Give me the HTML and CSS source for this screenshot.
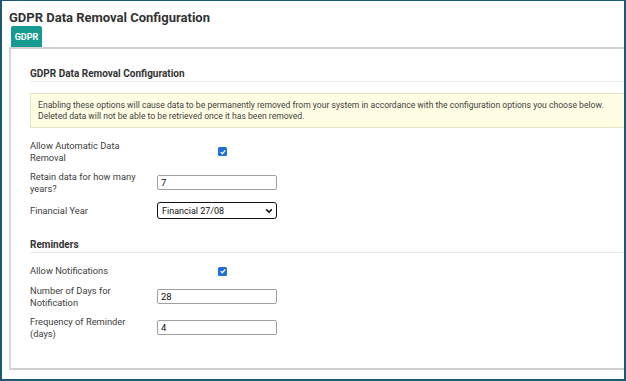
FILE: index.html
```html
<!DOCTYPE html>
<html>
<head>
<meta charset="utf-8">
<link rel="stylesheet" href="styles.css">
</head>
<body>
<div class="frame">
  <h1 class="title">GDPR Data Removal Configuration</h1>
  <div class="tabs"><span class="tab">GDPR</span></div>
  <div class="panel">
    <h2 class="section-title">GDPR Data Removal Configuration</h2>
    <div class="warning">Enabling these options will cause data to be permanently removed from your system in accordance with the configuration options you choose below.<br>Deleted data will not be able to be retrieved once it has been removed.</div>
    <div class="form">
      <div class="row">
        <label class="lbl">Allow Automatic Data Removal</label>
        <div class="ctl"><span class="check"><svg viewBox="0 0 10 10" width="10" height="10"><path d="M2.2 5.2 L4.2 7.2 L7.9 2.9" fill="none" stroke="#fff" stroke-width="1.6"/></svg></span></div>
      </div>
      <div class="row">
        <label class="lbl">Retain data for how many years?</label>
        <div class="ctl"><input class="txt" type="text" value="7"></div>
      </div>
      <div class="row">
        <label class="lbl">Financial Year</label>
        <div class="ctl"><div class="select"><span>Financial 27/08</span><svg viewBox="0 0 10 10" width="8" height="8"><path d="M1.5 3 L5 6.5 L8.5 3" fill="none" stroke="#111" stroke-width="2"/></svg></div></div>
      </div>
    </div>
    <h2 class="section-title reminders">Reminders</h2>
    <div class="form">
      <div class="row">
        <label class="lbl">Allow Notifications</label>
        <div class="ctl"><span class="check"><svg viewBox="0 0 10 10" width="10" height="10"><path d="M2.2 5.2 L4.2 7.2 L7.9 2.9" fill="none" stroke="#fff" stroke-width="1.6"/></svg></span></div>
      </div>
      <div class="row">
        <label class="lbl">Number of Days for Notification</label>
        <div class="ctl"><input class="txt" type="text" value="28"></div>
      </div>
      <div class="row">
        <label class="lbl">Frequency of Reminder (days)</label>
        <div class="ctl"><input class="txt" type="text" value="4"></div>
      </div>
    </div>
  </div>
</div>
</body>
</html>
```
FILE: styles.css
```css
* { box-sizing: border-box; }
html, body { margin: 0; padding: 0; }
body { font-family: Roboto, "Liberation Sans", sans-serif; color: #333; background: #fff; }
.frame {
  width: 626px; height: 381px; overflow: hidden;
  border-style: solid; border-color: #1b5976;
  border-width: 1px 2px 2px 2px;
  padding-left: 7px;
  background: #fff;
}
.title {
  margin: 8px 0 0 0; font-size: 13px; line-height: 17px; font-weight: 700; color: #333;
}
.tabs { display: flex; padding-left: 2px; height: 21px; }
.tab {
  background: #169a92; color: #fff; font-weight: 700; font-size: 9px;
  width: 31px; height: 21px; display: flex; align-items: center; justify-content: center;
  border-radius: 2px 2px 0 0;
}
.panel {
  border-top: 2px solid #cfcfcf; border-left: 2px solid #d6d6d6; border-bottom: 2px solid #cfcfcf;
  width: 640px; height: 323px;
  padding: 18px 0 0 19px;
}
.section-title {
  margin: 0; font-size: 10px; line-height: 13px; font-weight: 700; color: #333;
  padding-bottom: 1px; border-bottom: 1px solid #e8e8e8;
}
.warning {
  margin-top: 11px; background: #fffde3; border: 1px solid #e6e4c4;
  font-size: 8.6px; line-height: 10.5px; color: #3f3f3f; padding: 6px 7px 6px 7px;
  height: 35px;
}
.form { display: flex; flex-direction: column; gap: 8px; margin-top: 12px; }
.row { display: flex; align-items: center; }
.lbl { width: 127px; padding-right: 12px; font-size: 9.3px; line-height: 11.6px; color: #3d3d3d; }
.ctl { display: flex; align-items: center; }
.check {
  margin-left: 61px; width: 9px; height: 9px; background: #1f6fd6; border-radius: 1.5px;
  display: flex; align-items: center; justify-content: center;
}
.check svg { width: 8px; height: 8px; }
.txt {
  width: 120px; height: 15px; border: 1px solid #a0a0a0; border-radius: 2px;
  font-family: Roboto, "Liberation Sans", sans-serif; font-size: 9.5px; color: #111;
  padding: 0 3px; margin: 0; outline: none;
}
.select {
  width: 120px; height: 17px; border: 1.5px solid #111; border-radius: 3px;
  display: flex; align-items: center; justify-content: space-between;
  padding: 0 3px 0 4px; font-size: 9px; color: #111;
}
.reminders { margin-top: 19px; }
```
